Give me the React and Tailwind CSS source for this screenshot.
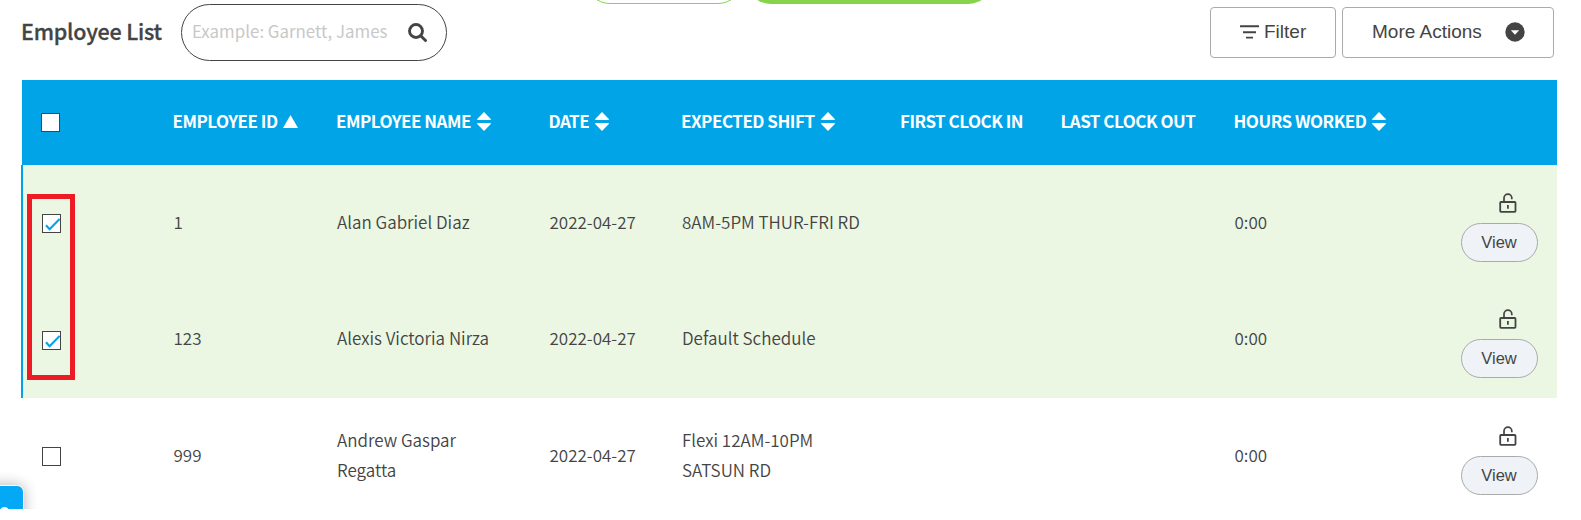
import React from "react";

const COLS = "grid grid-cols-[150.5px_163.5px_212.5px_132.5px_219px_160.5px_173px_1fr]";

function Checkbox({ checked }) {
  return (
    <span className="block h-[19px] w-[19px] shrink-0 border border-[#444] bg-white">
      {checked && (
        <svg viewBox="0 0 17 17" className="block h-[17px] w-[17px]" fill="none" stroke="#00a4e7" strokeWidth="2.1">
          <path d="M3 10.2 L6.6 14.2 L16.6 3.9" />
        </svg>
      )}
    </span>
  );
}

function SortIcon() {
  return (
    <svg viewBox="0 0 14 19" className="h-[19px] w-[14px] shrink-0" fill="white">
      <path d="M7 0 L13.8 7 V8 H0.2 V7 Z" />
      <path d="M7 19 L13.8 12 V11 H0.2 V12 Z" />
    </svg>
  );
}

function UnlockIcon() {
  return (
    <svg viewBox="0 0 18 20" className="h-[20px] w-[18px]" fill="none" stroke="#444" strokeWidth="1.8">
      <rect x="1.2" y="9" width="15.3" height="9.8" rx="0.8" />
      <path d="M5 9 V5 A3.7 3.7 0 0 1 12.8 5 V6.3" strokeWidth="1.7" />
      <path d="M8.9 12 V15.8" />
    </svg>
  );
}

function Head({ children, sort }) {
  return (
    <div className="flex items-center whitespace-nowrap">
      <span className="pb-[3px] text-[17px] leading-[30px]">{children}</span>
      {sort === "both" && <span className="-mt-[2px] ml-[6px]"><SortIcon /></span>}
      {sort === "up" && (
        <svg viewBox="0 0 15 13" className="-mt-[2px] ml-[5px] h-[13px] w-[15px]" fill="white">
          <path d="M7.5 0 L15 13 H0 Z" />
        </svg>
      )}
    </div>
  );
}

const ROWS = [
  { id: "1", name: "Alan Gabriel Diaz", shift: "8AM-5PM THUR-FRI RD", on: true },
  { id: "123", name: "Alexis Victoria Nirza", shift: "Default Schedule", on: true },
  { id: "999", name: "Andrew Gaspar Regatta", shift: "Flexi 12AM-10PM SATSUN RD", on: false },
];

function Row({ row }) {
  return (
    <div
      className={
        COLS +
        " h-[116.5px] items-center border-l-2 text-[17px] font-[350] leading-[30px] " +
        (row.on ? "border-[#00a4e7] bg-[#ebf7e3]" : "border-transparent bg-white")
      }
    >
      <div className="pl-[19px] pt-[1px]"><Checkbox checked={row.on} /></div>
      <div className="pb-[3px]">{row.id}</div>
      <div className="w-[160px] pb-[3px]">{row.name}</div>
      <div className="pb-[3px]">2022-04-27</div>
      <div className="w-[190px] pb-[3px]">{row.shift}</div>
      <div />
      <div />
      <div className="grid grid-cols-[226px_77px] items-center">
        <div className="pb-[3px]">0:00</div>
        <div className="flex flex-col items-center pt-[8px]">
          <span className="ml-[17px]"><UnlockIcon /></span>
          <button className="mt-[10px] h-[39px] w-[77px] rounded-full border border-[#aaa] bg-[#eff3f7] pb-px font-['Liberation_Sans',sans-serif] text-[16.5px] font-normal leading-none">
            View
          </button>
        </div>
      </div>
    </div>
  );
}

export default function App() {
  return (
    <div className="relative h-[520px] w-[1581px] overflow-hidden bg-white font-['Noto_Sans_CJK_SC',sans-serif] text-[#444]">
      <div className="absolute -top-[46px] left-[585px] h-[50px] w-[158px] rounded-[25px] border border-[#85d44b]" />
      <div className="absolute -top-[46px] left-[746px] h-[50px] w-[247px] rounded-[25px] bg-[#85d44b]" />

      <header className="flex h-[80px] items-start pl-[21px]">
        <h1 className="mt-[11px] w-[160px] whitespace-nowrap text-[21.5px] font-medium leading-[40px] tracking-[-0.2px] [-webkit-text-stroke:0.3px_#444]">Employee List</h1>
        <div className="mt-[4px] flex h-[57px] w-[266px] items-center rounded-full border border-[#444] pl-[10px] pr-[19px]">
          <span className="flex-1 whitespace-nowrap pb-[3px] text-[16.9px] leading-[30px] text-[#c8c8c8]">Example: Garnett, James</span>
          <svg viewBox="0 0 19 19" className="h-[19px] w-[19px]" fill="none" stroke="#444" strokeWidth="2.9">
            <circle cx="8" cy="8" r="6.5" />
            <path d="M12.7 12.7 L17.5 17.5" strokeLinecap="round" />
          </svg>
        </div>
        <div className="ml-auto mr-[27px] mt-[7px] flex gap-[6px] font-['Liberation_Sans',sans-serif] text-[19px]">
          <button className="flex h-[51px] w-[126px] items-center rounded-[4px] border border-[#aaa] pb-px pl-[29px]">
            <svg viewBox="0 0 19 14" className="-mt-px mr-[5px] h-[14px] w-[19px]" stroke="#444" strokeWidth="1.9">
              <path d="M0 1.2 H19 M3 7.2 H16 M6 12.6 H13" />
            </svg>
            Filter
          </button>
          <button className="flex h-[51px] w-[212px] items-center rounded-[4px] border border-[#aaa] pb-px pl-[29px]">
            More Actions
            <svg viewBox="0 0 20 20" className="-mt-px ml-auto mr-[28px] h-[20px] w-[20px]">
              <circle cx="10" cy="10" r="9.7" fill="#444" />
              <path d="M5.8 8.3 H14.2 L10 12.8 Z" fill="white" />
            </svg>
          </button>
        </div>
      </header>

      <div className="ml-[21px] w-[1536px]">
        <div className={COLS + " ml-px h-[85px] items-center bg-[#00a4e7] font-bold tracking-[-0.5px] text-white"}>
          <div className="pl-[19px]"><Checkbox /></div>
          <Head sort="up">EMPLOYEE ID</Head>
          <Head sort="both">EMPLOYEE NAME</Head>
          <Head sort="both">DATE</Head>
          <Head sort="both">EXPECTED SHIFT</Head>
          <Head>FIRST CLOCK IN</Head>
          <Head>LAST CLOCK OUT</Head>
          <Head sort="both">HOURS WORKED</Head>
        </div>
        {ROWS.map((r) => <Row key={r.id} row={r} />)}
      </div>

      <div className="absolute left-[27px] top-[194px] h-[186px] w-[48px] border-[5px] border-[#ed1c24]" />
      <div className="absolute left-0 top-[509px] h-[11px] w-full bg-white" />

      <div className="absolute left-0 top-[470px] h-[39px] w-[45px] overflow-hidden">
        <div className="absolute -left-[30px] top-[15px] h-[60px] w-[54px] rounded-[7px] border border-white bg-[#03a9f4] shadow-[0_0_14px_rgba(0,0,0,0.3)]" />
        <div className="absolute left-0 top-[37px] h-[9px] w-[9px] rounded-full bg-white" />
      </div>
    </div>
  );
}
